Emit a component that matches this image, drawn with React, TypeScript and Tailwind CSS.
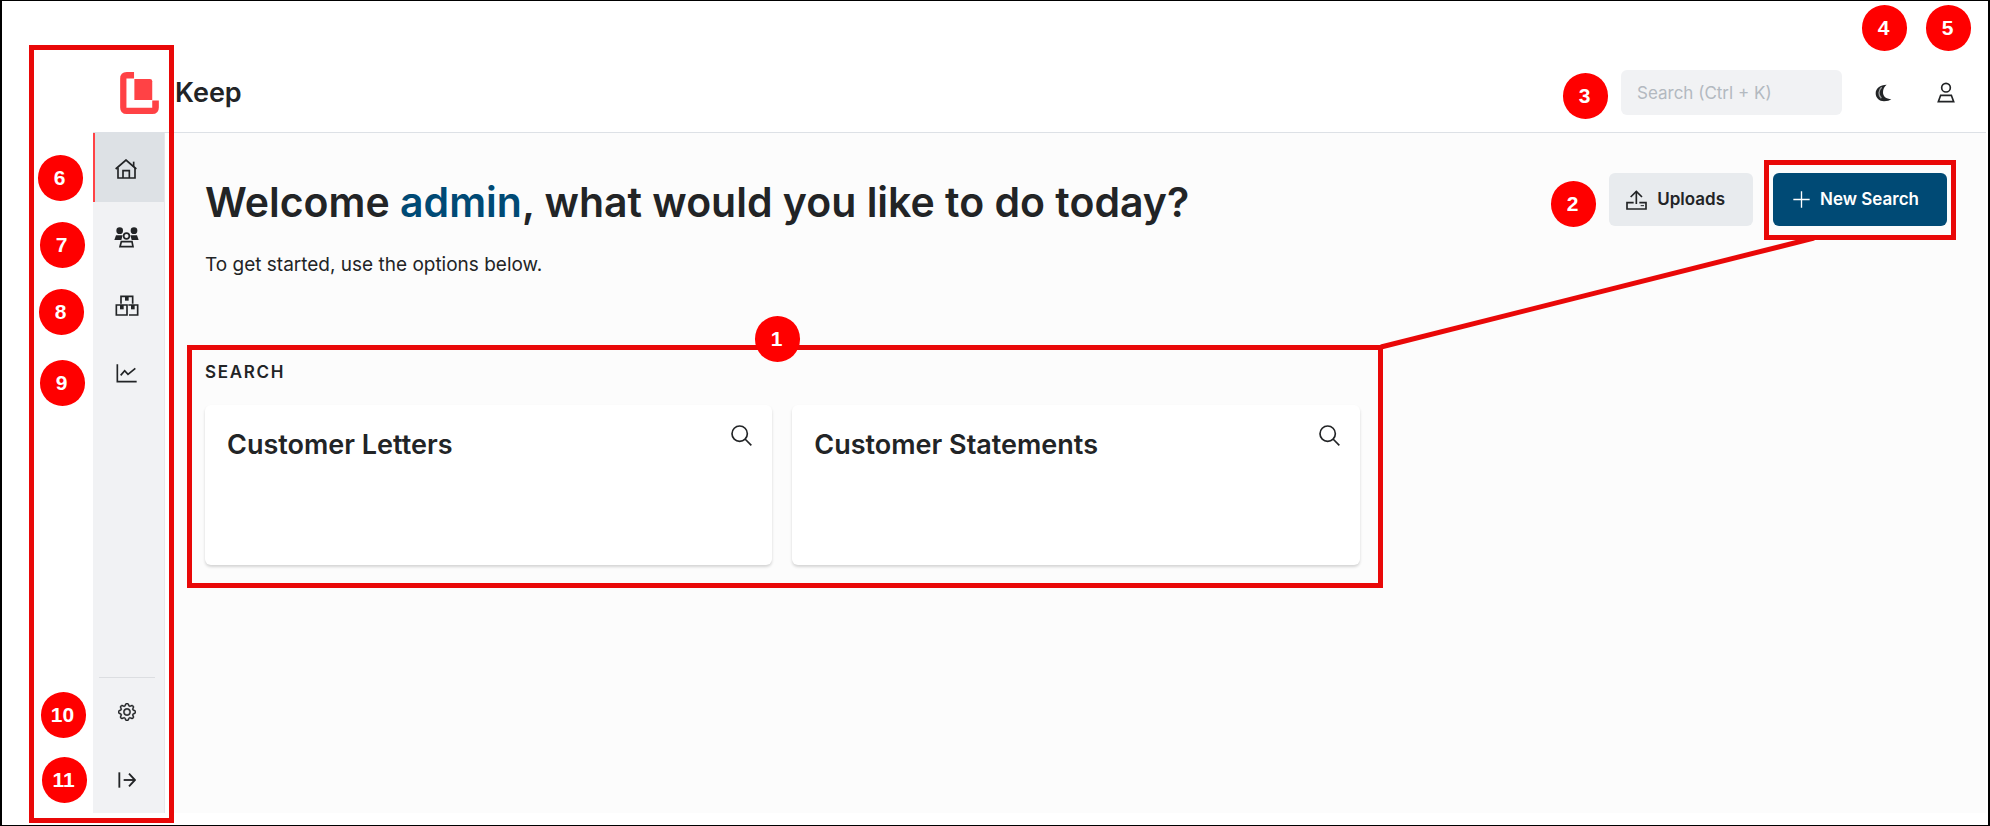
import type { ReactNode } from "react";
import { BsGear } from "react-icons/bs";

function HomeIcon() {
  return (
    <svg className="h-5 w-[22px]" viewBox="0 0 66 60" fill="none" stroke="currentColor" strokeWidth="5" aria-hidden="true">
      <path d="M2 30 L33 3 L64 30" />
      <path d="M56 24 V8" />
      <path d="M9 26 V57 H60 V26" />
      <path d="M24 57 V35 H43 V57" />
    </svg>
  );
}

function PeopleIcon() {
  return (
    <svg className="h-[21px] w-[25px]" viewBox="0 0 75 63" aria-hidden="true">
      <g fill="currentColor">
        <circle cx="17" cy="11" r="10" />
        <circle cx="60" cy="11" r="10" />
        <path d="M1 39 L6 25 H26 L22 39 Z" />
        <path d="M74 39 L69 25 H49 L53 39 Z" />
      </g>
      <g fill="none" stroke="currentColor" strokeWidth="5">
        <circle cx="37.500" cy="27" r="8.500" />
        <path d="M22 44 H54 L57 59 H18 Z" />
      </g>
    </svg>
  );
}

function BoxesIcon() {
  return (
    <svg className="h-[21px] w-[24px]" viewBox="0 0 72 63" aria-hidden="true">
      <g fill="none" stroke="currentColor" strokeWidth="5">
        <path d="M18 26 V4 H53 V26" />
        <path d="M4 30 H36 V60 H4 Z" />
        <path d="M42 60 H68 V30 H40" />
      </g>
      <g fill="currentColor">
        <path d="M30 4 H41 V17 H30 Z" />
        <path d="M15 30 H26 V43 H15 Z" />
        <path d="M48 30 H59 V43 H48 Z" />
      </g>
    </svg>
  );
}

function ChartIcon() {
  return (
    <svg className="h-[19px] w-[21px]" viewBox="0 0 63 57" fill="none" stroke="currentColor" strokeWidth="5" aria-hidden="true">
      <path d="M4 1 V53 H62" />
      <path d="M14 34 L26 20 L36 31 L58 13" />
    </svg>
  );
}

function LogoutIcon() {
  return (
    <svg className="h-4 w-[18px]" viewBox="0 0 54 48" fill="none" stroke="currentColor" strokeWidth="5.5" aria-hidden="true">
      <path d="M4 1 V47" />
      <path d="M17 24 H50" />
      <path d="M33 5 L51 24 L33 43" />
    </svg>
  );
}

function MoonIcon() {
  return (
    <svg className="h-[18px] w-[17px]" viewBox="0 0 51 54" aria-hidden="true">
      <path
        d="M35 2 C15 2 2 13 2 28 C2 42 13 52 27 52 C37 52 44 50 49 46 C33 45 24 37 24 25 C24 15 28 7 35 2 Z"
        fill="currentColor"
      />
      <path d="M20 10 C10 19 9 33 19 43" fill="none" stroke="#9a9c9e" strokeWidth="4" />
    </svg>
  );
}

function PersonIcon() {
  return (
    <svg className="h-[21px] w-[18px]" viewBox="0 0 54 63" fill="none" stroke="currentColor" strokeWidth="5" aria-hidden="true">
      <circle cx="27" cy="17" r="13" />
      <path d="M11 40 H43 L50 59 H4 Z" />
    </svg>
  );
}

function UploadIcon() {
  return (
    <svg className="h-5 w-[21px]" viewBox="0 0 63 60" fill="none" stroke="currentColor" strokeWidth="5" aria-hidden="true">
      <path d="M31 42 V4" />
      <path d="M14 21 L31 4 L48 21" />
      <path d="M23 38 H3 V57 H60 V38 H40" />
      <path d="M44 47 H54" strokeWidth="3" />
    </svg>
  );
}

function PlusIcon() {
  return (
    <svg className="size-[17px]" viewBox="0 0 51 51" fill="none" stroke="currentColor" strokeWidth="4" aria-hidden="true">
      <path d="M25.500 1 V50 M1 25.500 H50" />
    </svg>
  );
}

function MagnifierIcon() {
  return (
    <svg className="size-[21px]" viewBox="0 0 63 63" fill="none" stroke="currentColor" strokeWidth="5" aria-hidden="true">
      <circle cx="26" cy="26" r="23" />
      <path d="M42 42 L61 61" />
    </svg>
  );
}

function Logo() {
  return (
    <svg className="h-[42px] w-[39px]" viewBox="0 0 117 127" fill="#ff4245" aria-hidden="true">
      <path d="M20 0 H42 V20 H19 V108 H97 V86 H117 V107 Q117 127 97 127 H20 Q0 127 0 107 V20 Q0 0 20 0 Z" />
      <path d="M43 21 H90 Q97 21 97 28 V85 H43 Z" />
    </svg>
  );
}

function NavItem({ label, active = false, children }: { label: string; active?: boolean; children: ReactNode }) {
  return (
    <a
      href="#"
      aria-label={label}
      aria-current={active ? "page" : undefined}
      className={
        active
          ? "flex h-[69px] items-center justify-center border-l-2 border-[#ff4245] bg-[#dde1e5] pt-0.5 pr-2"
          : "flex h-[68px] items-center justify-center pt-0.5 pr-1"
      }
    >
      {children}
    </a>
  );
}

function Card({ title }: { title: string }) {
  return (
    <a
      href="#"
      className="flex h-40 items-start justify-between rounded-md bg-white pt-5 pr-5 pl-[22px] shadow-[0_2px_3px_rgba(0,0,0,0.16)]"
    >
      <h3 className="pt-0.5 text-[27px] leading-9 font-semibold">{title}</h3>
      <MagnifierIcon />
    </a>
  );
}

const badges = [
  { label: "1", place: "left-[755px] top-[316px]" },
  { label: "2", place: "right-[394px] top-[181px]" },
  { label: "3", place: "right-[382px] top-[73px]" },
  { label: "4", place: "right-[83px] top-[5px]" },
  { label: "5", place: "right-[19px] top-[5px]" },
  { label: "6", place: "left-[38px] top-[155px]" },
  { label: "7", place: "left-[40px] top-[222px]" },
  { label: "8", place: "left-[39px] top-[289px]" },
  { label: "9", place: "left-[40px] top-[360px]" },
  { label: "10", place: "left-[41px] top-[692px]" },
  { label: "11", place: "left-[42px] top-[757px]" },
];

function Callouts() {
  return (
    <div className="pointer-events-none absolute -top-px -right-0.5 -bottom-px -left-0.5">
      <div className="absolute top-[45px] bottom-[3px] left-[29px] w-[145px] border-5 border-[#e90808]" />
      <div className="absolute top-[345px] right-[607px] left-[187px] h-[243px] border-5 border-[#e90808]" />
      <div className="absolute top-[160px] right-[34px] h-20 w-[192px] border-5 border-[#e90808]" />
      <svg className="absolute top-[236px] right-[172px] h-[114px] w-[438px]" viewBox="0 0 438 114" aria-hidden="true">
        <path d="M1 111 L434 2" stroke="#e90808" strokeWidth="5" />
      </svg>
      {badges.map((b) => (
        <span
          key={b.label}
          className={`absolute flex h-[46px] w-[45px] items-center justify-center rounded-full bg-[#ff0000] pr-0.5 font-['Liberation_Sans',Arial,sans-serif] text-[21px] leading-6 font-bold text-white ${b.place}`}
        >
          {b.label}
        </span>
      ))}
    </div>
  );
}

export default function App() {
  return (
    <div className="relative flex min-h-screen flex-col border-t border-r-2 border-b border-l-2 border-black bg-white pt-[55px] pr-0.5 pb-3 pl-[91px] font-[Inter,sans-serif] text-[#222426]">
      <header className="flex h-[77px] items-center border-b border-[#dde1e6] pr-[31px] pb-[3px] pl-[27px]">
        <Logo />
        <span className="ml-4 text-[27px] leading-9 font-semibold">Keep</span>
        <input
          type="search"
          aria-label="Search"
          placeholder="Search (Ctrl + K)"
          className="ml-auto h-[45px] w-[221px] rounded-md bg-[#f1f2f4] px-4 text-[17px] placeholder:text-[#b3b9c0]"
        />
        <button type="button" aria-label="Dark mode" className="ml-[33px]">
          <MoonIcon />
        </button>
        <button type="button" aria-label="Account" className="ml-[45px]">
          <PersonIcon />
        </button>
      </header>

      <div className="flex flex-1">
        <nav aria-label="Main" className="flex w-[72px] flex-col border-r border-[#e6e8eb] bg-[#f1f2f4]">
          <NavItem label="Home" active>
            <HomeIcon />
          </NavItem>
          <NavItem label="Users">
            <PeopleIcon />
          </NavItem>
          <NavItem label="Packages">
            <BoxesIcon />
          </NavItem>
          <NavItem label="Reports">
            <ChartIcon />
          </NavItem>
          <div className="mt-auto mr-[9px] -mb-px ml-1.5 border-t border-[#dcdee1]" />
          <NavItem label="Settings">
            <BsGear className="size-[18px]" stroke="currentColor" strokeWidth="0.4" />
          </NavItem>
          <NavItem label="Log out">
            <LogoutIcon />
          </NavItem>
        </nav>

        <main className="ml-2 flex-1 bg-[#fcfcfc] pt-10 pr-[39px] pl-8">
          <div className="flex items-start justify-between">
            <div>
              <h1 className="text-[41px] leading-[58px] font-semibold">
                Welcome <span className="text-[#004a75]">admin</span>, what would you like to do today?
              </h1>
              <p className="mt-[18px] text-[19px] leading-8">To get started, use the options below.</p>
            </div>
            <div className="flex gap-5">
              <button
                type="button"
                className="flex h-[53px] items-center gap-2.5 rounded-md bg-[#e8ebee] pr-7 pl-[17px] text-[17px] font-semibold"
              >
                <UploadIcon />
                Uploads
              </button>
              <button
                type="button"
                className="flex h-[53px] items-center gap-2.5 rounded-md bg-[#004a75] pr-7 pl-5 text-[17px] font-semibold text-white"
              >
                <PlusIcon />
                New Search
              </button>
            </div>
          </div>

          <section className="mt-[79px]">
            <h2 className="text-[17px] leading-6 font-semibold tracking-widest">SEARCH</h2>
            <div className="mt-[21px] grid grid-cols-3 gap-5">
              <Card title="Customer Letters" />
              <Card title="Customer Statements" />
            </div>
          </section>
        </main>
      </div>

      <Callouts />
    </div>
  );
}
